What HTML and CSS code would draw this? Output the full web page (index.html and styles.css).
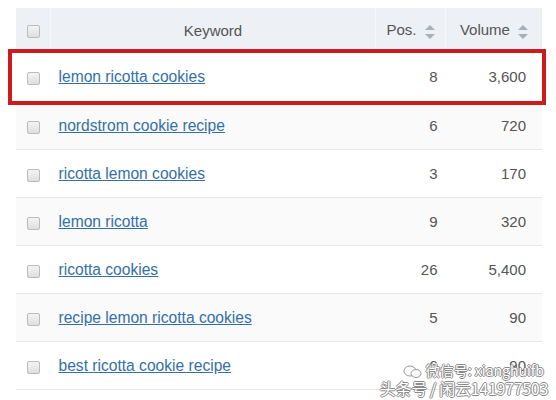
FILE: index.html
```html
<!DOCTYPE html>
<html lang="en">
<head>
  <meta charset="UTF-8">
  <title>Keywords</title>
  <link rel="stylesheet" href="styles.css">
</head>
<body>

  <div class="wrap">
    <table class="kw-table">
      <thead>
        <tr>
          <th class="col-check"><span class="box"></span></th>
          <th class="col-kw">Keyword</th>
          <th class="col-pos">Pos. <span class="sort"></span></th>
          <th class="col-vol">Volume <span class="sort"></span></th>
        </tr>
      </thead>
      <tbody>
        <tr class="first">
          <td class="col-check"><span class="box"></span></td>
          <td class="col-kw"><a href="#">lemon ricotta cookies</a></td>
          <td class="num">8</td>
          <td class="num">3,600</td>
        </tr>
        <tr>
          <td class="col-check"><span class="box"></span></td>
          <td class="col-kw"><a href="#">nordstrom cookie recipe</a></td>
          <td class="num">6</td>
          <td class="num">720</td>
        </tr>
        <tr>
          <td class="col-check"><span class="box"></span></td>
          <td class="col-kw"><a href="#">ricotta lemon cookies</a></td>
          <td class="num">3</td>
          <td class="num">170</td>
        </tr>
        <tr>
          <td class="col-check"><span class="box"></span></td>
          <td class="col-kw"><a href="#">lemon ricotta</a></td>
          <td class="num">9</td>
          <td class="num">320</td>
        </tr>
        <tr>
          <td class="col-check"><span class="box"></span></td>
          <td class="col-kw"><a href="#">ricotta cookies</a></td>
          <td class="num">26</td>
          <td class="num">5,400</td>
        </tr>
        <tr>
          <td class="col-check"><span class="box"></span></td>
          <td class="col-kw"><a href="#">recipe lemon ricotta cookies</a></td>
          <td class="num">5</td>
          <td class="num">90</td>
        </tr>
        <tr>
          <td class="col-check"><span class="box"></span></td>
          <td class="col-kw"><a href="#">best ricotta cookie recipe</a></td>
          <td class="num">6</td>
          <td class="num">90</td>
        </tr>
      </tbody>
    </table>

    <div class="highlight"></div>

    <div class="watermark">
      <div class="wm-line1">
        <svg width="20" height="14" viewBox="0 0 20 14">
          <ellipse cx="7" cy="6" rx="6" ry="5" fill="none" stroke="#999" stroke-width="1"/>
          <ellipse cx="13" cy="8.5" rx="5" ry="4" fill="#fff" stroke="#999" stroke-width="1"/>
        </svg>
        微信号: xianghuifb
      </div>
      <div class="wm-line2">头条号 / 闲云141977503</div>
    </div>
  </div>

</body>
</html>
```

FILE: styles.css
```css
body {
  margin: 0;
  background: #fff;
  font-family: "Liberation Sans", Arial, sans-serif;
}

.wrap {
  position: relative;
  padding: 8px 14px 0 16px;
  height: 392px;
  overflow: hidden;
}

.kw-table {
  width: 526px;
  border-collapse: collapse;
  table-layout: fixed;
  font-size: 15px;
}

.kw-table th {
  background: #edf0f4;
  color: #555;
  font-weight: normal;
  height: 44px;
  padding: 0;
  border-left: 1px solid #f7f8fa;
}

.kw-table th:first-child {
  border-left: none;
}

.kw-table td {
  height: 47px;
  padding: 0;
  border-bottom: 1px solid #e6e8eb;
  color: #555;
}

.kw-table tr.first td {
  height: 49px;
}

.kw-table tbody tr:nth-child(even) td {
  background: #fafafb;
}

.col-check {
  width: 34px;
  text-align: center;
}

.col-kw {
  width: 324px;
}

th.col-kw {
  text-align: center;
}

td.col-kw {
  padding-left: 8px !important;
  font-size: 15.6px;
}

.col-pos {
  width: 69px;
}

.col-vol {
  width: 96px;
}

.kw-table a {
  color: #3470a6;
  color: #3470a6;
  text-decoration: underline;
}

.num {
  text-align: right;
  padding-right: 8px !important;
}

.kw-table td.num:last-child {
  padding-right: 16px !important;
}

.box {
  display: inline-block;
  width: 11px;
  height: 11px;
  border: 1px solid #b9bcc0;
  border-radius: 2px;
  background: linear-gradient(#f4f4f4, #dedede);
  vertical-align: middle;
}

.sort {
  display: inline-block;
  position: relative;
  width: 10px;
  height: 14px;
  vertical-align: middle;
  margin-left: 4px;
}

.sort::before,
.sort::after {
  content: "";
  position: absolute;
  left: 0;
  border-left: 5px solid transparent;
  border-right: 5px solid transparent;
}

.sort::before {
  top: 0;
  border-bottom: 5px solid #a9afb6;
}

.sort::after {
  bottom: 0;
  border-top: 5px solid #a9afb6;
}

.highlight {
  position: absolute;
  left: 8px;
  top: 49px;
  width: 530px;
  height: 47px;
  border: 4px solid #cc1a1f;
  height: 48px;
}

.watermark {
  position: absolute;
  right: 8px;
  bottom: 4px;
  text-align: right;
  font-family: "Noto Sans CJK SC", sans-serif;
  color: #fff;
  text-shadow: -1px 0 #8a8a8a, 1px 0 #8a8a8a, 0 -1px #8a8a8a, 0 1px #8a8a8a;
  line-height: 1;
}

.wm-line1 {
  font-size: 14px;
  margin-right: 4px;
}

.wm-line1 svg {
  vertical-align: middle;
}

.wm-line2 {
  font-size: 16px;
  letter-spacing: -0.3px;
  margin-top: 1px;
}
```
